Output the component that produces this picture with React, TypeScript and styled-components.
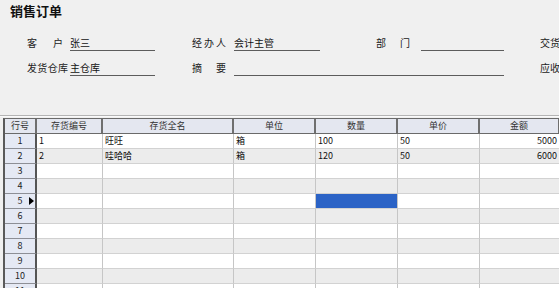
import React from 'react';
import styled, { createGlobalStyle } from 'styled-components';

const GlobalStyle = createGlobalStyle`
    html, body {
        margin: 0;
        padding: 0;
        background: #f0f0f0;
        overflow: hidden;
    }
    body {
        font-family: "Noto Sans CJK SC", "Noto Sans", sans-serif;
        color: #111;
    }
`;

const COLS = '32px 66px 131px 82px 82px 82px 80px';

type Line = {
    code: string;
    name: string;
    unit: string;
    qty: string;
    price: string;
    amount: string;
};

const lines: Line[] = [
    { code: '1', name: '旺旺', unit: '箱', qty: '100', price: '50', amount: '5000' },
    { code: '2', name: '哇哈哈', unit: '箱', qty: '120', price: '50', amount: '6000' },
];

const headers = ['存货编号', '存货全名', '单位', '数量', '单价', '金额'];

const App: React.FC = () => {
    const rows = Array.from({ length: 12 }, (_, i) => i + 1);
    const currentRow = 5;

    return (
        <Page>
            <GlobalStyle />
            <Title>销售订单</Title>
            <Form>
                <FormRow>
                    <Field $ml={27} $gap={7}>
                        <Label $w={36}>客户</Label>
                        <Value $w={85}>张三</Value>
                    </Field>
                    <Field $ml={37}>
                        <Label $w={34}>经办人</Label>
                        <Value $w={86}>会计主管</Value>
                    </Field>
                    <Field $ml={56} $gap={11}>
                        <Label $w={34}>部门</Label>
                        <Value $w={83}></Value>
                    </Field>
                    <Field $ml={36}>
                        <Label $w={40}>交货日期</Label>
                        <Value $w={85}></Value>
                    </Field>
                </FormRow>
                <FormRow>
                    <Field $ml={27} $gap={2}>
                        <Label $w={41}>发货仓库</Label>
                        <Value $w={85}>主仓库</Value>
                    </Field>
                    <Field $ml={37}>
                        <Label $w={34}>摘要</Label>
                        <Value $w={270}></Value>
                    </Field>
                    <Field $ml={36}>
                        <Label $w={40}>应收余额</Label>
                        <Value $w={85}></Value>
                    </Field>
                </FormRow>
            </Form>
            <Divider />
            <Grid>
                <HeaderRow>
                    <HeadCell>行号</HeadCell>
                    {headers.map((h) => (
                        <HeadCell key={h}>{h}</HeadCell>
                    ))}
                </HeaderRow>
                {rows.map((n) => {
                    const line = lines[n - 1];
                    return (
                        <DataRow key={n} $alt={n % 2 === 0}>
                            <RowNo>
                                {n}
                                {n === currentRow && <Pointer />}
                            </RowNo>
                            <Cell>{line?.code}</Cell>
                            <Cell>{line?.name}</Cell>
                            <Cell>{line?.unit}</Cell>
                            <Cell $selected={n === currentRow}>{line?.qty}</Cell>
                            <Cell>{line?.price}</Cell>
                            <Cell $right>{line?.amount}</Cell>
                        </DataRow>
                    );
                })}
            </Grid>
        </Page>
    );
};

const Page = styled.div`
    width: 559px;
    height: 288px;
    overflow: hidden;
    background: #f0f0f0;
`;

const Title = styled.div`
    padding: 1px 0 0 10px;
    height: 19px;
    line-height: 19px;
    font-size: 13px;
    font-weight: 700;
    color: #111;
`;

const Form = styled.div`
    display: flex;
    flex-direction: column;
    gap: 9px;
    margin-top: 15px;
`;

const FormRow = styled.div`
    display: flex;
    align-items: flex-end;
    height: 16px;
    white-space: nowrap;
`;

const Field = styled.div<{ $ml: number; $gap?: number }>`
    display: flex;
    align-items: flex-end;
    gap: ${(p) => p.$gap ?? 8}px;
    margin-left: ${(p) => p.$ml}px;
    flex-shrink: 0;
`;

const Label = styled.span<{ $w: number }>`
    display: block;
    width: ${(p) => p.$w}px;
    flex-shrink: 0;
    font-size: 10px;
    line-height: 14px;
    color: #222;
    text-align: justify;
    text-align-last: justify;
    text-justify: inter-character;
    padding-bottom: 1px;
`;

const Value = styled.span<{ $w: number }>`
    display: block;
    width: ${(p) => p.$w}px;
    height: 15px;
    box-sizing: border-box;
    border-bottom: 1px solid #5c5c5c;
    font-size: 10px;
    line-height: 14px;
    color: #111;
    flex-shrink: 0;
`;

const Divider = styled.div`
    margin-top: 39px;
    height: 0;
    border-top: 1px solid #b4b4b4;
    border-bottom: 1px solid #fafafa;
`;

const Grid = styled.div`
    margin: 1px 0 0 3px;
    width: 600px;
    border-left: 2px solid #5a5a5a;
    border-top: 1px solid #6a6a6a;
    font-size: 9px;
`;

const HeaderRow = styled.div`
    display: grid;
    grid-template-columns: ${COLS};
    height: 14px;
    border-bottom: 1px solid #6a6a6a;
    background: #e4e7f0;
`;

const HeadCell = styled.div`
    box-sizing: border-box;
    border-right: 2px solid #6f6f6f;
    text-align: center;
    line-height: 14px;
    color: #333;
`;

const DataRow = styled.div<{ $alt: boolean }>`
    display: grid;
    grid-template-columns: ${COLS};
    height: 15px;
    box-sizing: border-box;
    background: ${(p) => (p.$alt ? '#ececec' : '#ffffff')};
`;

const RowNo = styled.div`
    position: relative;
    box-sizing: border-box;
    background: #e5e9f4;
    border-right: 2px solid #555;
    border-bottom: 1px solid #8d8f96;
    text-align: center;
    line-height: 14px;
    color: #222;
`;

const Pointer = styled.span`
    position: absolute;
    right: 1px;
    top: 3px;
    width: 0;
    height: 0;
    border-top: 4px solid transparent;
    border-bottom: 4px solid transparent;
    border-left: 5px solid #000;
`;

const Cell = styled.div<{ $selected?: boolean; $right?: boolean }>`
    box-sizing: border-box;
    border-right: 1px solid #c6c6c6;
    border-bottom: 1px solid #d2d2d2;
    padding: 0 2px;
    line-height: 14px;
    text-align: ${(p) => (p.$right ? 'right' : 'left')};
    background: ${(p) => (p.$selected ? '#2b63c6' : 'transparent')};
    color: #111;
    white-space: nowrap;
    overflow: hidden;
`;

export default App;
